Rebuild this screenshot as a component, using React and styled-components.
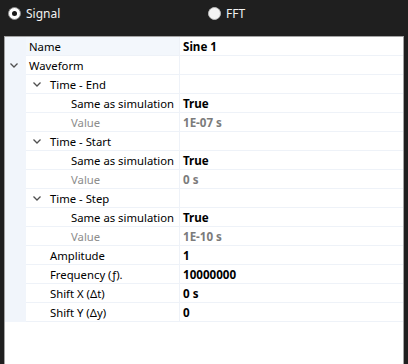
import React from "react";
import styled, { createGlobalStyle } from "styled-components";

const GlobalStyle = createGlobalStyle`
  html, body {
    margin: 0;
    padding: 0;
    background: #1f1f1f;
    overflow: hidden;
  }
  body {
    font-family: "Noto Sans", "Open Sans", sans-serif;
    font-size: 12px;
  }
`;

const Page = styled.div`
  width: 408px;
  height: 364px;
  background: #1f1f1f;
  display: flex;
  flex-direction: column;
`;

// Radio bar at top
const RadioBar = styled.div`
  height: 36px;
  display: grid;
  grid-template-columns: 200px 200px;
  align-items: center;
  padding-left: 8px;
  box-sizing: border-box;
`;

const RadioOption = styled.label`
  display: flex;
  align-items: center;
  gap: 5px;
  color: #f2f2f2;
  font-size: 12px;
  margin-top: -9px;
`;

const RadioCircle = styled.span`
  width: 11px;
  height: 11px;
  border-radius: 50%;
  background: ${(p) => (p.checked ? "#ffffff" : "#f4f4f4")};
  border: 1px solid ${(p) => (p.checked ? "#8a8a8a" : "#bdbdbd")};
  display: flex;
  align-items: center;
  justify-content: center;

  &::after {
    content: "";
    width: 5px;
    height: 5px;
    border-radius: 50%;
    background: ${(p) => (p.checked ? "#1a1a1a" : "transparent")};
  }
`;

// Property grid panel
const Panel = styled.div`
  flex: 1;
  margin-left: 4px;
  width: 398px;
  background: #ffffff;
  border: 1px solid #a3a3a3;
  border-bottom: none;
  font-size: 11.3px;
`;

const Row = styled.div`
  display: flex;
  height: 19px;
`;

const Gutter = styled.div`
  width: 21px;
  flex: none;
  background: #f1f5fb;
  display: flex;
  align-items: center;
  padding-left: 5px;
  box-sizing: border-box;
`;

const LabelCell = styled.div`
  width: 154px;
  flex: none;
  box-sizing: border-box;
  display: flex;
  align-items: center;
  padding-left: ${(p) => p.pad}px;
  background: ${(p) => (p.highlight ? "#f3f7fc" : "#ffffff")};
  border-bottom: 1px solid #eef2f8;
  border-right: 1px solid #eef2f8;
  color: ${(p) => (p.muted ? "#8c8c8c" : "#000000")};
  white-space: nowrap;
`;

const ValueCell = styled.div`
  flex: 1;
  display: flex;
  align-items: center;
  padding-left: 3px;
  border-bottom: 1px solid #eef2f8;
  font-weight: 700;
  font-size: 11.6px;
  color: ${(p) => (p.muted ? "#7b7b7b" : "#000000")};
  white-space: nowrap;
`;

const ChevronBox = styled.span`
  width: 17px;
  flex: none;
  display: flex;
  align-items: center;
`;

const Chevron = () => (
  <svg width="8" height="5" viewBox="0 0 8 5">
    <path d="M0.5 0.5 L4 4 L7.5 0.5" fill="none" stroke="#505050" strokeWidth="1.3" />
  </svg>
);

const rows = [
  { label: "Name", value: "Sine 1", level: 0, highlight: true },
  { label: "Waveform", level: 0, group: true },
  { label: "Time - End", level: 1, group: true },
  { label: "Same as simulation", value: "True", level: 2 },
  { label: "Value", value: "1E-07 s", level: 2, muted: true },
  { label: "Time - Start", level: 1, group: true },
  { label: "Same as simulation", value: "True", level: 2 },
  { label: "Value", value: "0 s", level: 2, muted: true },
  { label: "Time - Step", level: 1, group: true },
  { label: "Same as simulation", value: "True", level: 2 },
  { label: "Value", value: "1E-10 s", level: 2, muted: true },
  { label: "Amplitude", value: "1", level: 1 },
  { label: "Frequency (ƒ).", value: "10000000", level: 1 },
  { label: "Shift X (Δt)", value: "0 s", level: 1 },
  { label: "Shift Y (Δy)", value: "0", level: 1 },
];

const PropertyRow = ({ row }) => {
  const inGutter = row.group && row.level === 0;
  const inLabel = row.group && row.level > 0;
  const pad = 3 + row.level * 21 - (inLabel ? 17 : 0);
  return (
    <Row>
      <Gutter>{inGutter && <Chevron />}</Gutter>
      <LabelCell pad={pad} highlight={row.highlight} muted={row.muted}>
        {inLabel && (
          <ChevronBox>
            <Chevron />
          </ChevronBox>
        )}
        {row.label}
      </LabelCell>
      <ValueCell muted={row.muted}>{row.value || ""}</ValueCell>
    </Row>
  );
};

export default function App() {
  return (
    <>
      <GlobalStyle />
      <Page>
        <RadioBar>
          <RadioOption>
            <RadioCircle checked />
            Signal
          </RadioOption>
          <RadioOption>
            <RadioCircle />
            FFT
          </RadioOption>
        </RadioBar>
        <Panel>
          {rows.map((r, i) => (
            <PropertyRow key={i} row={r} />
          ))}
        </Panel>
      </Page>
    </>
  );
}
